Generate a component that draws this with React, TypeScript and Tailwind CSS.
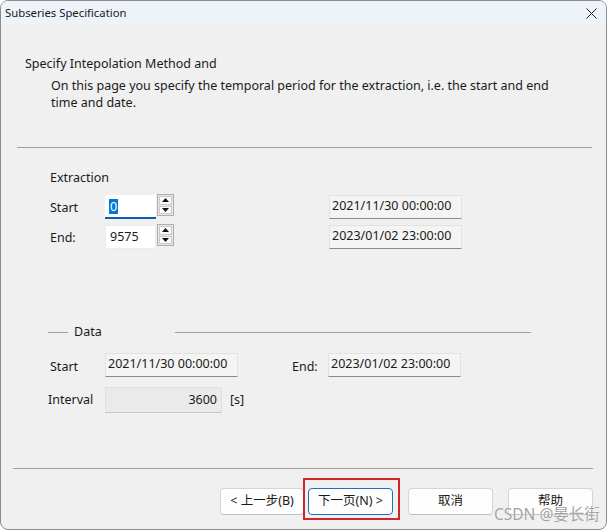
import React from "react";

const F = { fontFamily: '"Noto Sans", "Noto Sans CJK SC", sans-serif' };

function Spinner() {
  return (
    <div className="w-[17px] h-[22px] border border-[#adadad] bg-[#e9e9e9] flex flex-col gap-[1px] p-[1px]">
      <div className="flex-1 bg-[#fbfbfb] border border-[#c9c9c9] flex items-center justify-center">
        <svg width="7" height="4" viewBox="0 0 7 4"><path d="M3.5 0 L7 4 L0 4 Z" fill="#111" /></svg>
      </div>
      <div className="flex-1 bg-[#fbfbfb] border border-[#c9c9c9] flex items-center justify-center">
        <svg width="7" height="4" viewBox="0 0 7 4"><path d="M0 0 L7 0 L3.5 4 Z" fill="#111" /></svg>
      </div>
    </div>
  );
}

function ReadBox({ w, children }: { w: string; children: React.ReactNode }) {
  return (
    <div
      className={`${w} h-[24px] bg-[#f4f4f4] border border-[#e2e2e2] border-b-[#8a8a8a] flex items-start pt-[2px] pl-[2px] text-[12.5px] leading-[16px] text-[#1a1a1a] whitespace-nowrap`}
    >
      {children}
    </div>
  );
}

function Btn({ children, w = "w-[85px]", primary = false }: { children: React.ReactNode; w?: string; primary?: boolean }) {
  return (
    <div
      className={`${w} h-[27px] rounded-[4px] bg-[#fdfdfd] flex items-center justify-center text-[12.5px] text-[#1a1a1a] border whitespace-nowrap ${primary ? "border-[#1f6fbf]" : "border-[#d5d5d5] border-b-[#c0c0c0]"}`}
    >
      {children}
    </div>
  );
}

const T = "text-[12.5px] leading-[16px] text-[#1a1a1a]";

export default function App() {
  return (
    <div className="w-[608px] h-[531px] bg-white relative" style={F}>
      <div className="w-[607px] h-[530px] border border-[#8c8c8c] rounded-[8px] overflow-hidden bg-[#f0f0f0] flex flex-col">
        {/* title bar */}
        <div className="h-[24px] bg-[#eef2f9] flex items-center justify-between pl-[4px] pr-[9px] shrink-0">
          <span className="text-[11.3px] leading-[16px] text-[#1a1a1a]">Subseries Specification</span>
          <svg width="11" height="11" viewBox="0 0 11 11">
            <path d="M0.5 0.5 L10.5 10.5 M10.5 0.5 L0.5 10.5" stroke="#222" strokeWidth="1" />
          </svg>
        </div>

        {/* header text */}
        <div className={`mt-[31px] pl-[24px] ${T}`}>Specify Intepolation Method and</div>
        <div className="mt-[5px] pl-[50px] text-[12.5px] leading-[17px] text-[#1a1a1a] whitespace-nowrap">
          On this page you specify the temporal period for the extraction, i.e. the start and end
          <br />
          time and date.
        </div>

        {/* separator */}
        <div className="mt-[36px] ml-[16px] w-[575px] h-[1px] bg-[#a0a0a0]" />

        {/* Extraction */}
        <div className={`mt-[22px] pl-[49px] ${T}`}>Extraction</div>

        <div className="mt-[9px] flex items-start">
          <div className={`w-[55px] ml-[49px] h-[24px] flex items-center pt-[1px] ${T}`}>Start</div>
          <div className="w-[51px] h-[24px] bg-white border-b-2 border-[#0a5fb4] flex items-center pl-[4px]">
            <span className="bg-[#0078d7] text-white text-[12.5px] leading-[15px] px-[1px]">0</span>
          </div>
          <div className="ml-[1px] -mt-[1px]">
            <Spinner />
          </div>
          <div className="ml-[155px]">
            <ReadBox w="w-[133px]">2021/11/30 00:00:00</ReadBox>
          </div>
        </div>

        <div className="mt-[6px] flex items-start">
          <div className={`w-[55px] ml-[49px] h-[24px] flex items-center pt-[1px] ${T}`}>End:</div>
          <div className={`w-[51px] h-[24px] bg-white border border-[#ececec] flex items-center pl-[4px] ${T}`}>9575</div>
          <div className="ml-[1px] -mt-[1px]">
            <Spinner />
          </div>
          <div className="ml-[155px]">
            <ReadBox w="w-[133px]">2023/01/02 23:00:00</ReadBox>
          </div>
        </div>

        {/* Data group */}
        <div className="mt-[75px] flex items-center h-[16px]">
          <div className="ml-[47px] w-[20px] h-[1px] bg-[#a0a0a0]" />
          <span className={`ml-[6px] ${T}`}>Data</span>
          <div className="ml-[73px] w-[356px] h-[1px] bg-[#a0a0a0]" />
        </div>

        <div className="mt-[13px] flex items-start">
          <div className={`w-[55px] ml-[49px] h-[24px] flex items-center pt-[3px] ${T}`}>Start</div>
          <ReadBox w="w-[133px]">2021/11/30 00:00:00</ReadBox>
          <div className={`ml-[54px] w-[36px] h-[24px] flex items-center pt-[3px] ${T}`}>End:</div>
          <ReadBox w="w-[133px]">2023/01/02 23:00:00</ReadBox>
        </div>

        <div className="mt-[10px] flex items-start">
          <div className={`w-[57px] ml-[47px] h-[26px] flex items-center ${T}`}>Interval</div>
          <div className={`w-[117px] h-[26px] bg-[#eaeaea] border border-[#e0e0e0] border-b-[#c8c8c8] flex items-center justify-end pr-[4px] ${T}`}>
            3600
          </div>
          <div className={`ml-[8px] h-[26px] flex items-center ${T}`}>[s]</div>
        </div>

        {/* bottom separator */}
        <div className="mt-[55px] ml-[12px] w-[580px] h-[1px] bg-[#a0a0a0]" />

        {/* buttons */}
        <div className="mt-[19px] flex items-start">
          <div className="ml-[219px]">
            <Btn w="w-[84px]">&lt; 上一步(B)</Btn>
          </div>
          <div className="ml-[4px]">
            <Btn primary>下一页(N) &gt;</Btn>
          </div>
          <div className="ml-[15px]">
            <Btn>取消</Btn>
          </div>
          <div className="ml-[15px]">
            <Btn>帮助</Btn>
          </div>
        </div>
      </div>

      {/* red annotation box */}
      <div className="absolute left-[303px] top-[478px] w-[97px] h-[42px] border-2 border-[#d0262b]" />

      {/* watermark */}
      <div
        className="absolute left-[494px] top-[504px] text-[15.5px] leading-[20px] text-[#a3a3a3] whitespace-nowrap"
        style={{ textShadow: "0 0 1px #fff, 0 0 1px #fff" }}
      >
        CSDN @晏长街
      </div>
    </div>
  );
}
